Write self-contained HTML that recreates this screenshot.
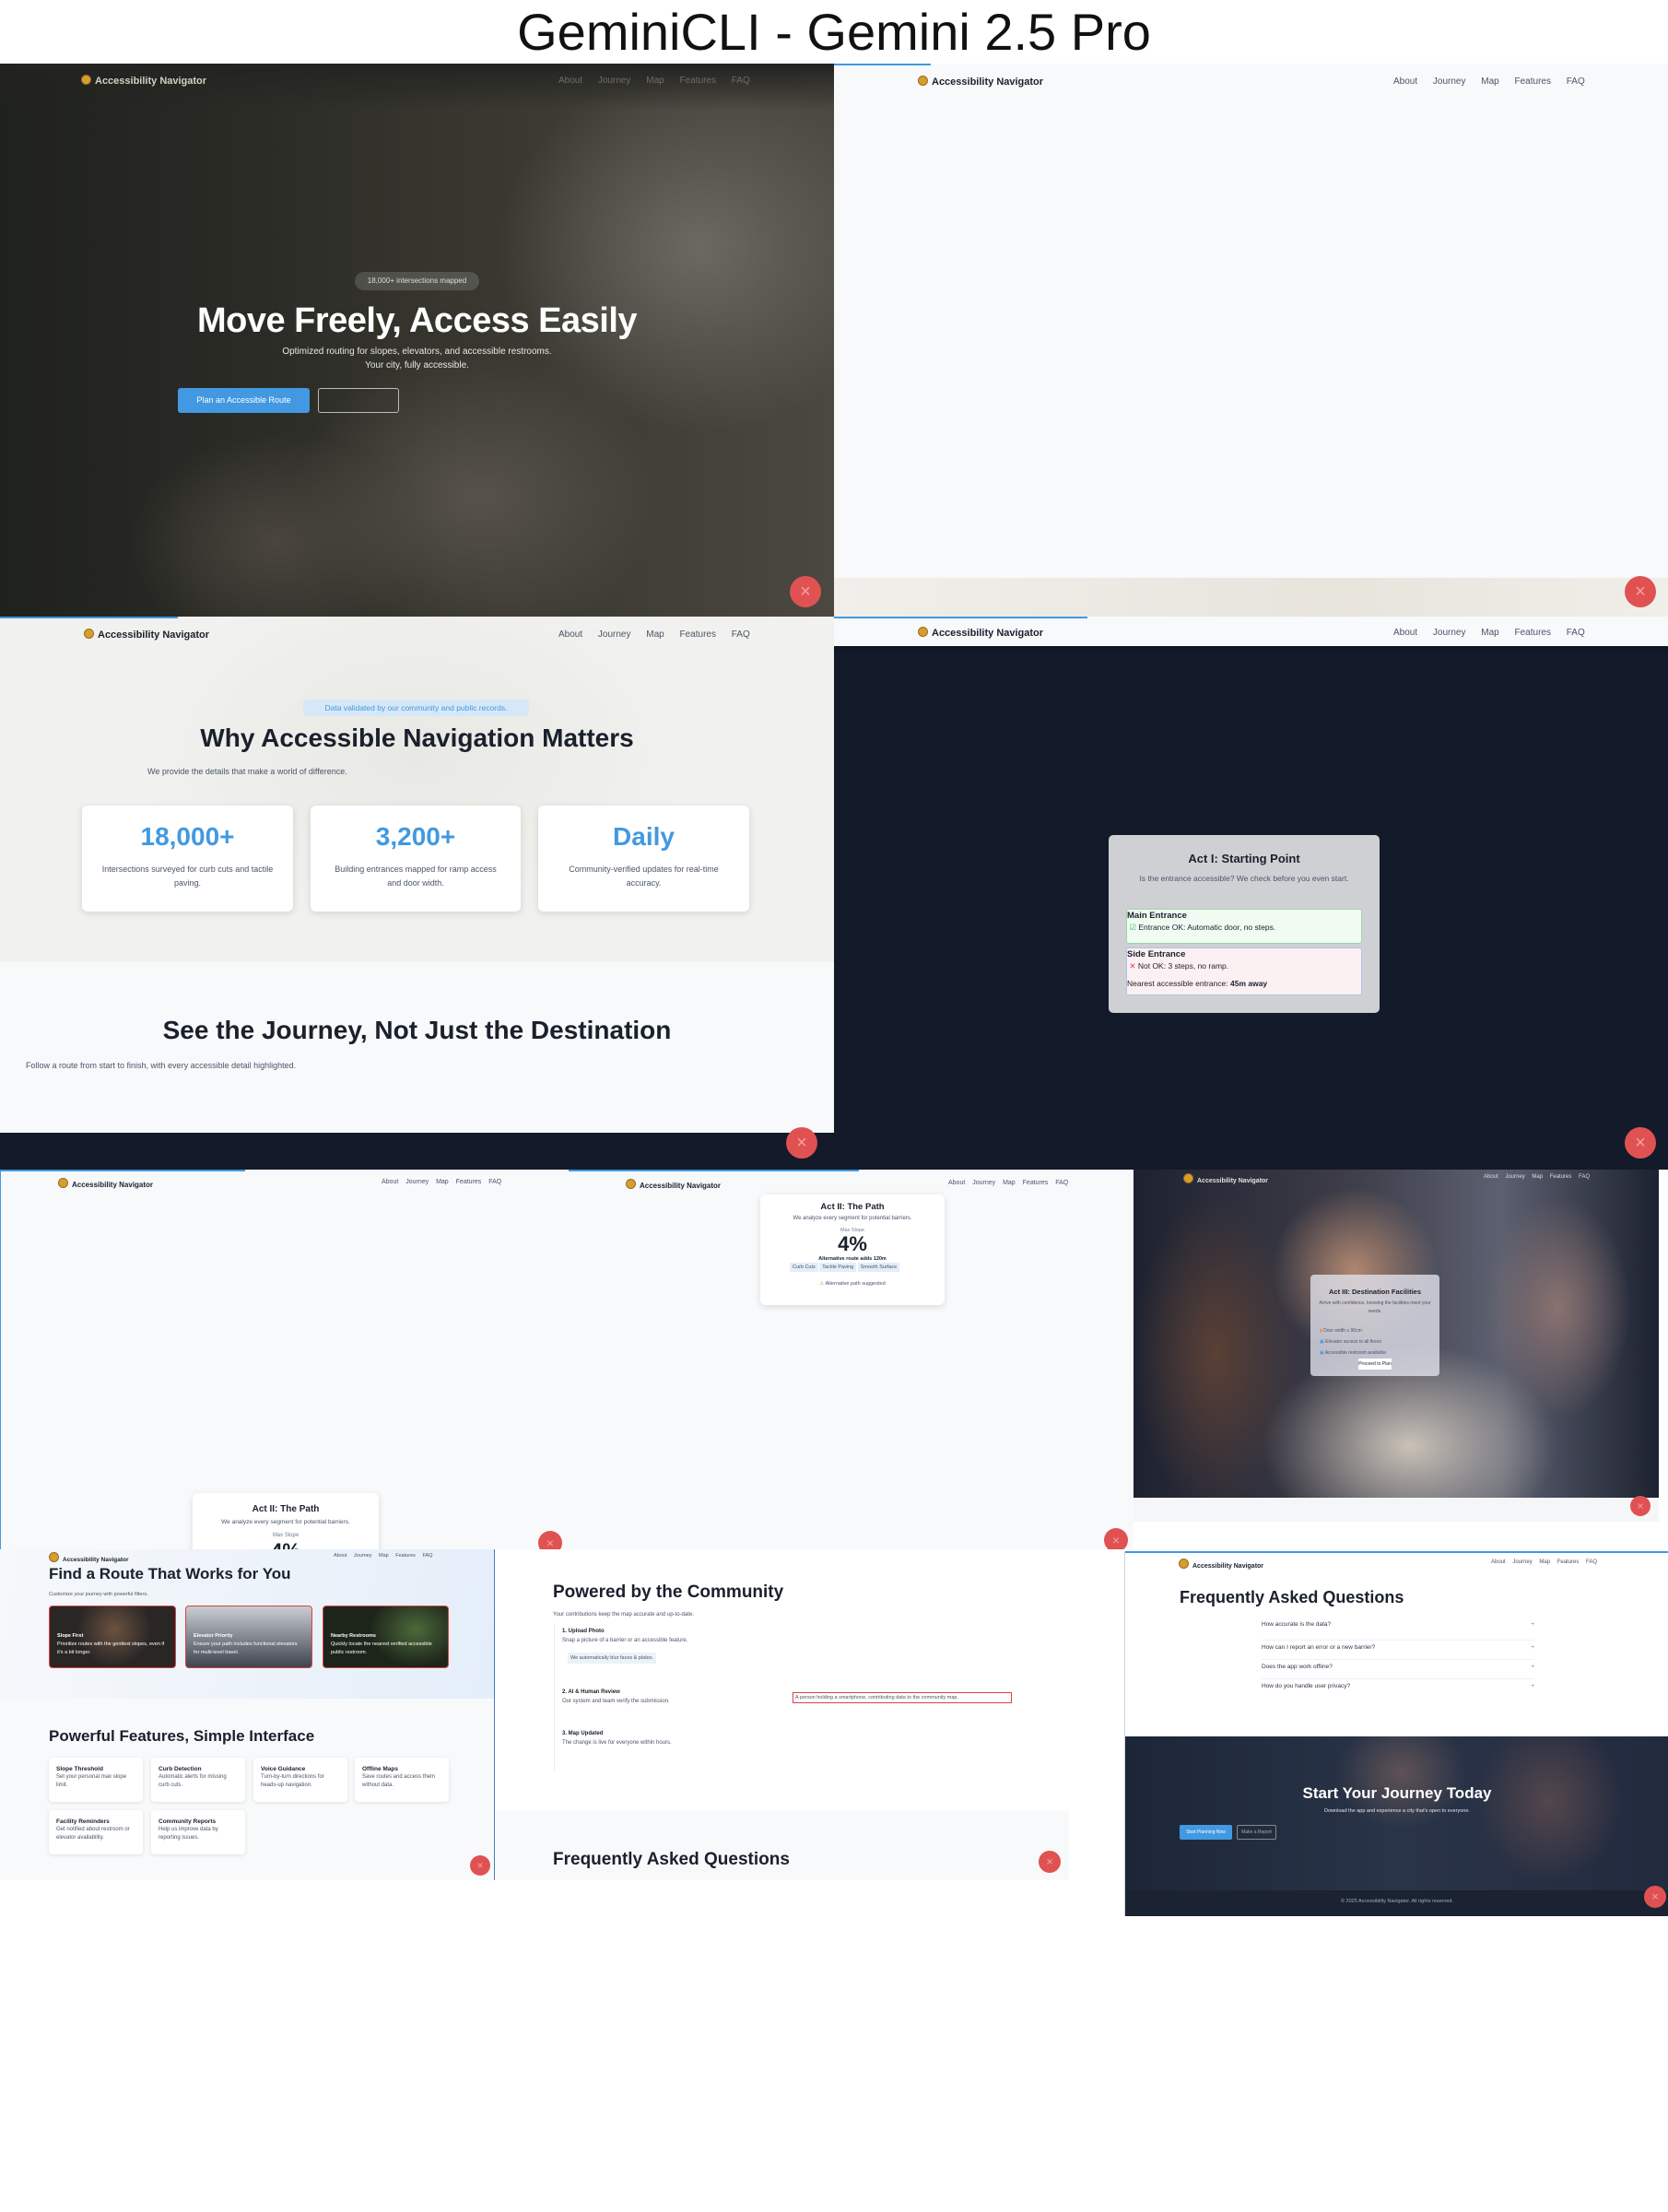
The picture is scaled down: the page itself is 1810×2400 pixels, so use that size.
<!DOCTYPE html>
<html><head><meta charset="utf-8">
<style>
*{margin:0;padding:0;box-sizing:border-box}
body{width:1810px;height:2400px;background:#fff;font-family:"Liberation Sans",sans-serif;position:relative;overflow:hidden;color:#1a202c}
.a{position:absolute}
.p{position:absolute;overflow:hidden}
.nav{position:absolute;font-size:10px;color:#4a5568;white-space:nowrap}
.logo{position:absolute;font-size:11px;font-weight:bold;color:#1a202c;white-space:nowrap}
.logo:before{content:"";display:inline-block;width:9px;height:9px;border-radius:50%;background:#d69e2e;border:1px solid #9c6b1f;margin-right:4px;vertical-align:-1px}
.rc{position:absolute;width:34px;height:34px;border-radius:50%;background:#e05252;color:#f7a0a0;text-align:center;line-height:34px;font-size:20px}
.c{text-align:center}
.card{position:absolute;background:#fff;border-radius:6px;box-shadow:0 2px 8px rgba(0,0,0,.12)}
.sc{position:absolute;background:#fff;border-radius:4px;box-shadow:0 1px 4px rgba(0,0,0,.1);padding:8px 8px;font-size:6px;color:#4a5568;line-height:9px}
.sc b{display:block;color:#1a202c;font-size:6.5px}
</style></head><body>
<div class="a c" style="left:0;top:0;width:1810px;top:2px;font-size:56px;color:#111">GeminiCLI - Gemini 2.5 Pro</div>

<!-- Panel 1 hero -->
<div class="p" style="left:0;top:69px;width:905px;height:600px;background:radial-gradient(ellipse 220px 200px at 760px 200px,#6a6962,transparent),radial-gradient(ellipse 200px 160px at 520px 470px,#57534a,transparent),radial-gradient(ellipse 160px 120px at 300px 520px,#4a463e,transparent),linear-gradient(90deg,#1f211d 0%,#2b2b26 30%,#393830 60%,#4a4840 100%)">
 <div class="a" style="left:0;top:0;width:905px;height:50px;background:linear-gradient(#232321,rgba(35,35,33,0))"></div>
 <div class="logo" style="left:88px;top:12px;color:#cfd2c0">Accessibility Navigator</div>
 <div class="nav" style="left:606px;top:13px;color:#6e6e62;word-spacing:14px">About Journey Map Features FAQ</div>
 <div class="a" style="left:385px;top:226px;width:135px;height:20px;border-radius:10px;background:rgba(255,255,255,.15);color:#ddd;font-size:8px;line-height:20px;text-align:center">18,000+ intersections mapped</div>
 <div class="a c" style="left:0;width:905px;top:258px;font-size:38px;font-weight:bold;color:#fff;letter-spacing:-.5px">Move Freely, Access Easily</div>
 <div class="a c" style="left:0;width:905px;top:305px;font-size:10px;color:#e8e8e8;line-height:15px">Optimized routing for slopes, elevators, and accessible restrooms.<br>Your city, fully accessible.</div>
 <div class="a" style="left:193px;top:352px;width:143px;height:27px;background:#4299e1;border-radius:3px;color:#fff;font-size:9px;line-height:27px;text-align:center">Plan an Accessible Route</div>
 <div class="a" style="left:345px;top:352px;width:88px;height:27px;border:1px solid #bbb;border-radius:3px"></div>
 <div class="rc" style="left:857px;top:556px">×</div>
</div>

<!-- Panel 2 -->
<div class="p" style="left:905px;top:69px;width:905px;height:600px;background:#f7f9fb">
 <div class="a" style="left:0;top:0;width:105px;height:2px;background:#4299e1"></div>
 <div class="logo" style="left:91px;top:13px">Accessibility Navigator</div>
 <div class="nav" style="left:607px;top:14px;word-spacing:14px">About Journey Map Features FAQ</div>
 <div class="a" style="left:0;top:558px;width:905px;height:42px;background:linear-gradient(90deg,#f0efea,#e7e4dc 60%,#f0eee8)"></div>
 <div class="rc" style="left:858px;top:556px">×</div>
</div>

<!-- Panel 3 -->
<div class="p" style="left:0;top:669px;width:905px;height:600px;background:#f7f9fb">
 <div class="a" style="left:0;top:0;width:905px;height:375px;background:radial-gradient(ellipse 300px 200px at 450px 150px,#e8e8e4,#f1f1ef)"></div>
 <div class="a" style="left:0;top:0;width:193px;height:2px;background:#4299e1"></div>
 <div class="logo" style="left:91px;top:13px">Accessibility Navigator</div>
 <div class="nav" style="left:606px;top:14px;word-spacing:14px">About Journey Map Features FAQ</div>
 <div class="a" style="left:329px;top:90px;width:245px;height:18px;background:#d6e8f7;border-radius:3px;color:#4299e1;font-size:8.5px;line-height:18px;text-align:center">Data validated by our community and public records.</div>
 <div class="a c" style="left:0;width:905px;top:116px;font-size:28px;font-weight:bold">Why Accessible Navigation Matters</div>
 <div class="a" style="left:160px;top:163px;font-size:9px;color:#4a5568">We provide the details that make a world of difference.</div>
 <div class="card" style="left:89px;top:205px;width:229px;height:115px"><div class="a c" style="width:229px;top:18px;font-size:28px;color:#4299e1;font-weight:bold">18,000+</div><div class="a c" style="width:229px;top:62px;font-size:9px;color:#4a5568;line-height:15px;padding:0 20px">Intersections surveyed for curb cuts and tactile paving.</div></div>
 <div class="card" style="left:337px;top:205px;width:228px;height:115px"><div class="a c" style="width:228px;top:18px;font-size:28px;color:#4299e1;font-weight:bold">3,200+</div><div class="a c" style="width:228px;top:62px;font-size:9px;color:#4a5568;line-height:15px;padding:0 25px">Building entrances mapped for ramp access and door width.</div></div>
 <div class="card" style="left:584px;top:205px;width:229px;height:115px"><div class="a c" style="width:229px;top:18px;font-size:28px;color:#4299e1;font-weight:bold">Daily</div><div class="a c" style="width:229px;top:62px;font-size:9px;color:#4a5568;line-height:15px;padding:0 20px">Community-verified updates for real-time accuracy.</div></div>
 <div class="a c" style="left:0;width:905px;top:433px;font-size:28px;font-weight:bold">See the Journey, Not Just the Destination</div>
 <div class="a" style="left:28px;top:482px;font-size:9px;color:#4a5568">Follow a route from start to finish, with every accessible detail highlighted.</div>
 <div class="a" style="left:0;top:560px;width:905px;height:40px;background:#141a29"></div>
 <div class="rc" style="left:853px;top:554px">×</div>
</div>

<!-- Panel 4 -->
<div class="p" style="left:905px;top:669px;width:905px;height:600px;background:#131a2a">
 <div class="a" style="left:0;top:0;width:905px;height:32px;background:#f7f9fb;box-shadow:0 2px 6px rgba(0,0,0,.4)"></div>
 <div class="a" style="left:0;top:0;width:275px;height:2px;background:#4299e1"></div>
 <div class="logo" style="left:91px;top:11px">Accessibility Navigator</div>
 <div class="nav" style="left:607px;top:12px;word-spacing:14px">About Journey Map Features FAQ</div>
 <div class="a" style="left:298px;top:237px;width:294px;height:193px;background:#cfd0d4;border-radius:5px">
  <div class="a c" style="width:294px;top:18px;font-size:13px;font-weight:bold">Act I: Starting Point</div>
  <div class="a c" style="width:294px;top:40px;font-size:8.5px;color:#4a5568;line-height:15px;padding:0 22px">Is the entrance accessible? We check before you even start.</div>
  <div class="a" style="left:19px;top:80px;width:256px;height:38px;background:#f0fbf2;border:1px solid #9ad5a6;border-radius:3px;font-size:8.5px;line-height:13px"><b style="font-size:9.5px">Main Entrance</b><br>&nbsp;<span style="color:#48bb78">☑</span> Entrance OK: Automatic door, no steps.</div>
  <div class="a" style="left:19px;top:122px;width:256px;height:52px;background:#fcf1f2;border:1px solid #a9c7e6;border-radius:3px;font-size:8.5px;line-height:13px"><b style="font-size:9.5px">Side Entrance</b><br>&nbsp;<span style="color:#e53e5e">✕</span> Not OK: 3 steps, no ramp.<br><span style="line-height:24px">Nearest accessible entrance: <b>45m away</b></span></div>
 </div>
 <div class="rc" style="left:858px;top:554px">×</div>
</div>

<!-- Row 3 A -->
<div class="p" style="left:0;top:1269px;width:617px;height:412px;background:#f7f9fb;border-left:1px solid #4299e1">
 <div class="a" style="left:0;top:0;width:265px;height:2px;background:#4299e1"></div>
 <div class="logo" style="left:62px;top:9px;font-size:8px">Accessibility Navigator</div>
 <div class="nav" style="left:413px;top:10px;font-size:7px;word-spacing:6px">About Journey Map Features FAQ</div>
 <div class="card" style="left:208px;top:351px;width:202px;height:80px"><div class="a c" style="width:202px;top:12px;font-size:10px;font-weight:bold">Act II: The Path</div><div class="a c" style="width:202px;top:28px;font-size:6.5px;color:#4a5568">We analyze every segment for potential barriers.</div><div class="a c" style="width:202px;top:43px;font-size:6px;color:#718096">Max Slope</div><div class="a c" style="width:202px;top:50px;font-size:22px;font-weight:bold">4%</div></div>
 <div class="rc" style="left:583px;top:392px;width:26px;height:26px;line-height:26px;font-size:14px">×</div>
</div>

<!-- Row 3 B -->
<div class="p" style="left:617px;top:1269px;width:613px;height:412px;background:#f7f9fb">
 <div class="a" style="left:0;top:0;width:315px;height:2px;background:#4299e1"></div>
 <div class="logo" style="left:62px;top:10px;font-size:8px">Accessibility Navigator</div>
 <div class="nav" style="left:412px;top:11px;font-size:7px;word-spacing:6px">About Journey Map Features FAQ</div>
 <div class="card" style="left:208px;top:27px;width:200px;height:120px">
  <div class="a c" style="width:200px;top:8px;font-size:9.5px;font-weight:bold">Act II: The Path</div>
  <div class="a c" style="width:200px;top:23px;font-size:6px;color:#4a5568">We analyze every segment for potential barriers.</div>
  <div class="a c" style="width:200px;top:36px;font-size:5.5px;color:#718096">Max Slope</div>
  <div class="a c" style="width:200px;top:41px;font-size:22px;font-weight:bold">4%</div>
  <div class="a c" style="width:200px;top:67px;font-size:5.5px;font-weight:bold">Alternative route adds 120m</div>
  <div class="a" style="left:32px;top:76px;font-size:5.5px;color:#4a5568"><span style="background:#e3eef9;padding:2px 3px">Curb Cuts</span> <span style="background:#e3eef9;padding:2px 3px">Tactile Paving</span> <span style="background:#e3eef9;padding:2px 3px">Smooth Surface</span></div>
  <div class="a c" style="width:200px;top:94px;font-size:5.5px;color:#4a5568"><span style="color:#ed8936">⚠</span> Alternative path suggested</div>
 </div>
 <div class="rc" style="left:581px;top:389px;width:26px;height:26px;line-height:26px;font-size:14px">×</div>
</div>

<!-- Row 3 C -->
<div class="p" style="left:1230px;top:1269px;width:580px;height:412px;background:#fff">
 <div class="a" style="left:0;top:0;width:570px;height:356px;background:radial-gradient(ellipse 90px 90px at 240px 110px,#b08770,transparent),radial-gradient(ellipse 160px 110px at 300px 300px,#c9c2b8,transparent),radial-gradient(ellipse 90px 170px at 90px 200px,#5a4035,transparent),radial-gradient(ellipse 80px 120px at 460px 150px,#8a7270,transparent),linear-gradient(90deg,#1e2230,#3d3c48 40%,#5c6070 70%,#1d2230)"></div>
 <div class="a" style="left:0;top:356px;width:570px;height:26px;background:#f5f6f8"></div>
 <div class="logo" style="left:54px;top:4px;font-size:7px;color:#e2e2e2">Accessibility Navigator</div>
 <div class="nav" style="left:380px;top:5px;font-size:6px;color:#ddd;word-spacing:6px">About Journey Map Features FAQ</div>
 <div class="a" style="left:192px;top:114px;width:140px;height:110px;background:rgba(225,228,238,.78);border-radius:4px">
  <div class="a c" style="width:140px;top:14px;font-size:7.5px;font-weight:bold">Act III: Destination Facilities</div>
  <div class="a c" style="width:140px;top:27px;font-size:5px;color:#4a5568;line-height:9px;padding:0 8px">Arrive with confidence, knowing the facilities meet your needs.</div>
  <div class="a" style="left:10px;top:55px;font-size:5px;color:#4a5568;line-height:12px"><span style="color:#ed8936">▮</span> Door width ≥ 90cm<br><span style="color:#4299e1">▣</span> Elevator access to all floors<br><span style="color:#4299e1">▣</span> Accessible restroom available</div>
  <div class="a" style="left:52px;top:91px;width:36px;height:12px;background:#fff;font-size:5px;line-height:12px;text-align:center">Proceed to Plan</div>
 </div>
 <div class="rc" style="left:539px;top:354px;width:22px;height:22px;line-height:22px;font-size:12px">×</div>
</div>

<!-- Row 4 A -->
<div class="p" style="left:0;top:1681px;width:537px;height:359px;background:#f7f9fb;border-right:1px solid #4a7fc0">
 <div class="a" style="left:0;top:0;width:537px;height:162px;background:linear-gradient(100deg,#f6f8fb,#e4eef9)"></div>
 <div class="logo" style="left:53px;top:3px;font-size:6.5px">Accessibility Navigator</div>
 <div class="nav" style="left:362px;top:4px;font-size:5.5px;word-spacing:6px">About Journey Map Features FAQ</div>
 <div class="a" style="left:53px;top:17px;font-size:17px;font-weight:bold">Find a Route That Works for You</div>
 <div class="a" style="left:53px;top:46px;font-size:5.5px;color:#4a5568">Customize your journey with powerful filters.</div>
 <div class="a" style="left:53px;top:61px;width:138px;height:68px;border:1px solid #e04040;border-radius:4px;background:radial-gradient(ellipse 40px 40px at 70px 25px,#6b5240,transparent),#2a2626;color:#fff;font-size:5.5px;padding:28px 8px 0;line-height:9px"><b>Slope First</b><br>Prioritize routes with the gentlest slopes, even if it's a bit longer.</div>
 <div class="a" style="left:201px;top:61px;width:138px;height:68px;border:1px solid #e04040;border-radius:4px;background:linear-gradient(#c9cdd3,#3e4450);color:#fff;font-size:5.5px;padding:28px 8px 0;line-height:9px"><b>Elevator Priority</b><br>Ensure your path includes functional elevators for multi-level travel.</div>
 <div class="a" style="left:350px;top:61px;width:137px;height:68px;border:1px solid #e04040;border-radius:4px;background:radial-gradient(ellipse 50px 40px at 100px 25px,#4c6a3a,transparent),#1d251b;color:#fff;font-size:5.5px;padding:28px 8px 0;line-height:9px"><b>Nearby Restrooms</b><br>Quickly locate the nearest verified accessible public restroom.</div>
 <div class="a" style="left:53px;top:193px;font-size:17px;font-weight:bold">Powerful Features, Simple Interface</div>
 <div class="sc" style="left:53px;top:226px;width:102px;height:48px"><b>Slope Threshold</b>Set your personal max slope limit.</div>
 <div class="sc" style="left:164px;top:226px;width:102px;height:48px"><b>Curb Detection</b>Automatic alerts for missing curb cuts.</div>
 <div class="sc" style="left:275px;top:226px;width:102px;height:48px"><b>Voice Guidance</b>Turn-by-turn directions for heads-up navigation.</div>
 <div class="sc" style="left:385px;top:226px;width:102px;height:48px"><b>Offline Maps</b>Save routes and access them without data.</div>
 <div class="sc" style="left:53px;top:283px;width:102px;height:48px"><b>Facility Reminders</b>Get notified about restroom or elevator availability.</div>
 <div class="sc" style="left:164px;top:283px;width:102px;height:48px"><b>Community Reports</b>Help us improve data by reporting issues.</div>
 <div class="rc" style="left:510px;top:332px;width:22px;height:22px;line-height:22px;font-size:12px">×</div>
</div>

<!-- Row 4 B -->
<div class="p" style="left:538px;top:1681px;width:622px;height:359px;background:#fff">
 <div class="a" style="left:62px;top:36px;font-size:19px;font-weight:bold">Powered by the Community</div>
 <div class="a" style="left:62px;top:68px;font-size:6px;color:#4a5568">Your contributions keep the map accurate and up-to-date.</div>
 <div class="a" style="left:63px;top:80px;width:1px;height:160px;background:#e2e8f0"></div>
 <div class="a" style="left:72px;top:84px;font-size:6px;color:#4a5568;line-height:10px"><b style="color:#1a202c">1. Upload Photo</b><br>Snap a picture of a barrier or an accessible feature.</div>
 <div class="a" style="left:78px;top:112px;background:#edf2f7;font-size:5.5px;color:#4a5568;padding:3px 3px">We automatically blur faces &amp; plates.</div>
 <div class="a" style="left:72px;top:150px;font-size:6px;color:#4a5568;line-height:10px"><b style="color:#1a202c">2. AI &amp; Human Review</b><br>Our system and team verify the submission.</div>
 <div class="a" style="left:322px;top:155px;width:238px;height:12px;border:1px solid #e04040;font-size:5.5px;line-height:10px;color:#4a5568;padding-left:2px">A person holding a smartphone, contributing data to the community map.</div>
 <div class="a" style="left:72px;top:195px;font-size:6px;color:#4a5568;line-height:10px"><b style="color:#1a202c">3. Map Updated</b><br>The change is live for everyone within hours.</div>
 <div class="a" style="left:0;top:284px;width:622px;height:75px;background:#f7f9fb"></div>
 <div class="a" style="left:62px;top:326px;font-size:19px;font-weight:bold">Frequently Asked Questions</div>
 <div class="rc" style="left:589px;top:327px;width:24px;height:24px;line-height:24px;font-size:13px">×</div>
</div>

<!-- Row 4 C -->
<div class="p" style="left:1220px;top:1683px;width:590px;height:396px;background:#fff;border-left:1px solid #cbd5e0">
 <div class="a" style="left:0;top:0;width:590px;height:2px;background:#4299e1"></div>
 <div class="logo" style="left:58px;top:8px;font-size:7px">Accessibility Navigator</div>
 <div class="nav" style="left:397px;top:9px;font-size:6px;word-spacing:6px">About Journey Map Features FAQ</div>
 <div class="a" style="left:59px;top:40px;font-size:18px;font-weight:bold">Frequently Asked Questions</div>
 <div class="a" style="left:148px;top:76px;width:296px;font-size:6.5px;color:#2d3748">
  <div style="height:21px;border-bottom:1px solid #edf2f7">How accurate is the data?<span style="float:right;color:#4299e1">+</span></div>
  <div style="height:21px;border-bottom:1px solid #edf2f7;padding-top:4px">How can I report an error or a new barrier?<span style="float:right;color:#4299e1">+</span></div>
  <div style="height:21px;border-bottom:1px solid #edf2f7;padding-top:4px">Does the app work offline?<span style="float:right;color:#4299e1">+</span></div>
  <div style="height:21px;padding-top:4px">How do you handle user privacy?<span style="float:right;color:#4299e1">+</span></div>
 </div>
 <div class="a" style="left:0;top:201px;width:590px;height:167px;background:radial-gradient(ellipse 70px 60px at 300px 40px,#5e5256,transparent),radial-gradient(ellipse 80px 90px at 460px 70px,#54464c,transparent),linear-gradient(90deg,#1c2638,#2a3448 50%,#222a3e)"></div>
 <div class="a c" style="left:0;width:590px;top:253px;font-size:17px;font-weight:bold;color:#fff">Start Your Journey Today</div>
 <div class="a c" style="left:0;width:590px;top:279px;font-size:5.5px;color:#e2e8f0">Download the app and experience a city that's open to everyone.</div>
 <div class="a" style="left:59px;top:297px;width:57px;height:16px;background:#4299e1;border-radius:2px;color:#fff;font-size:5px;line-height:16px;text-align:center">Start Planning Now</div>
 <div class="a" style="left:121px;top:297px;width:43px;height:16px;border:1px solid #888;border-radius:2px;color:#aaa;font-size:5px;line-height:14px;text-align:center">Make a Report</div>
 <div class="a" style="left:0;top:368px;width:590px;height:28px;background:#1b2232"></div>
 <div class="a c" style="left:0;width:590px;top:377px;font-size:5.5px;color:#a0aec0">© 2025 Accessibility Navigator. All rights reserved.</div>
 <div class="rc" style="left:563px;top:363px;width:24px;height:24px;line-height:24px;font-size:13px">×</div>
</div>
</body></html>
